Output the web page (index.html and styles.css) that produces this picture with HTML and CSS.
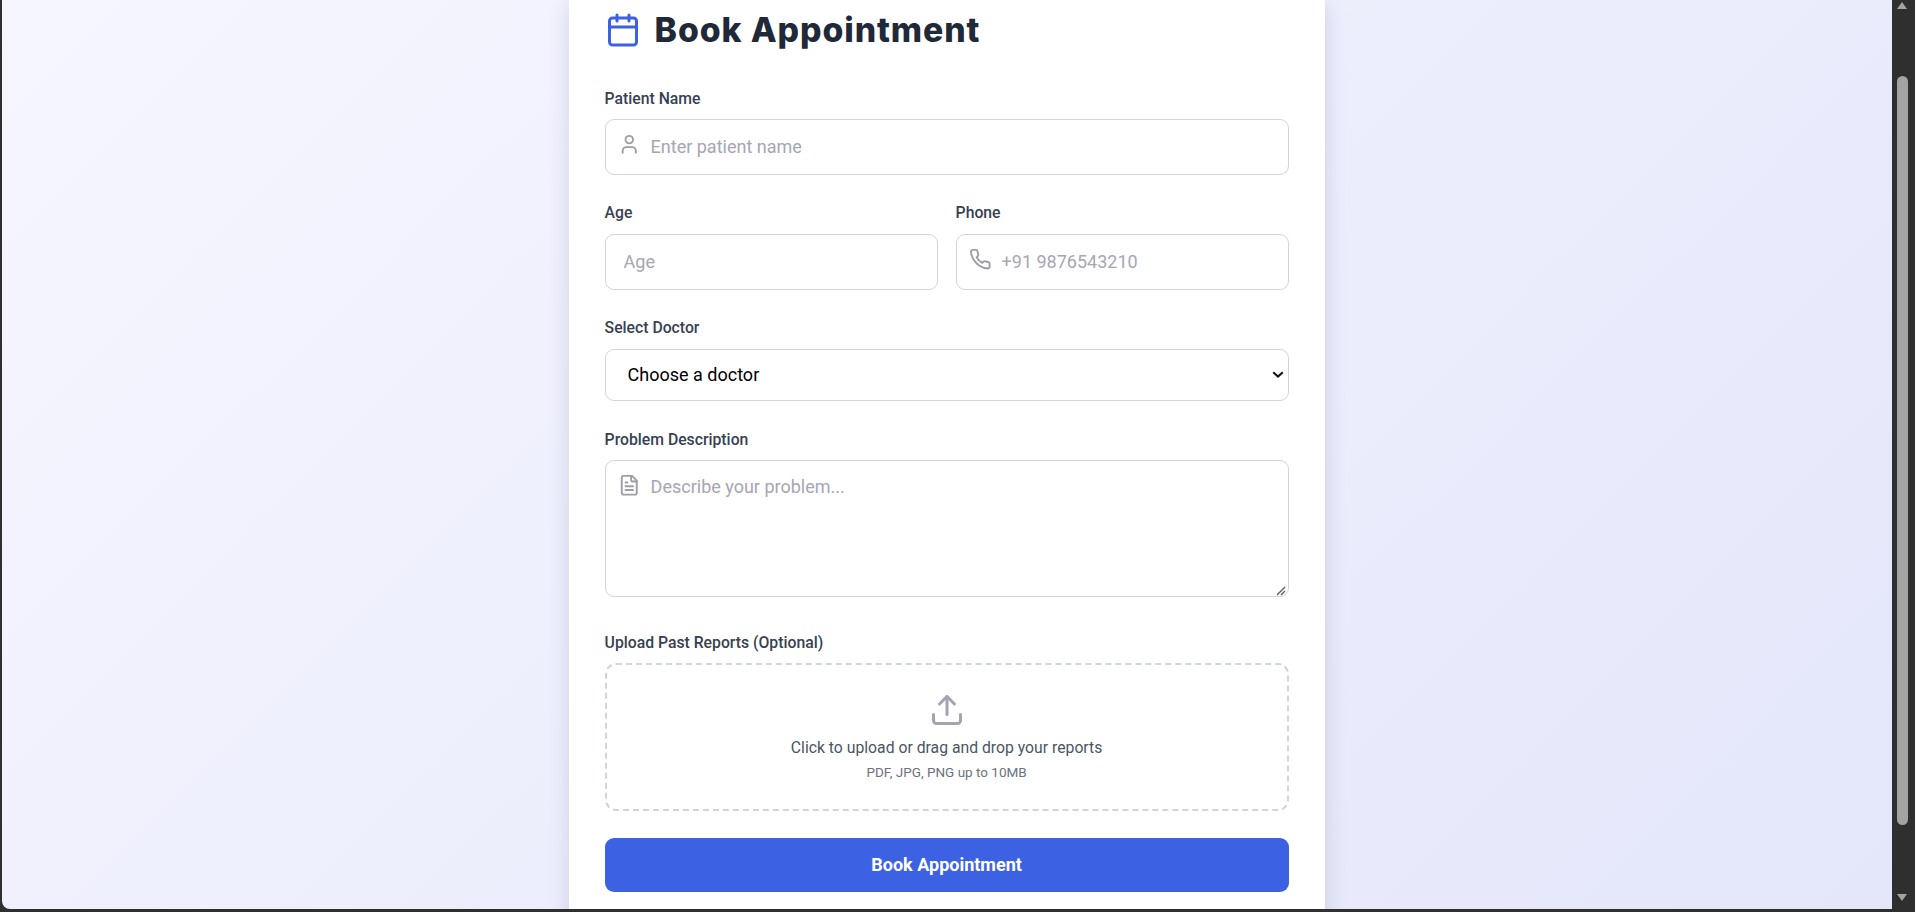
FILE: index.html
```html
<!DOCTYPE html>
<html lang="en">
<head>
<meta charset="utf-8">
<title>Book Appointment</title>
<link rel="stylesheet" href="styles.css">
</head>
<body>
<div class="window">
  <main class="page">
    <section class="card">
      <h1 class="title">
        <svg class="title-icon" viewBox="0 0 24 24" fill="none" stroke="currentColor" stroke-width="2" stroke-linecap="round" stroke-linejoin="round"><path d="M8 2v4"/><path d="M16 2v4"/><rect x="3" y="4" width="18" height="18" rx="2"/><path d="M3 10h18"/></svg>
        <span>Book Appointment</span>
      </h1>
      <form class="form">
        <div class="group">
          <label class="label">Patient Name</label>
          <div class="field">
            <svg class="icon" viewBox="0 0 24 24" fill="none" stroke="currentColor" stroke-width="2" stroke-linecap="round" stroke-linejoin="round"><path d="M19 21v-2a4 4 0 0 0-4-4H9a4 4 0 0 0-4 4v2"/><circle cx="12" cy="7" r="4"/></svg>
            <input class="input with-icon" type="text" placeholder="Enter patient name">
          </div>
        </div>
        <div class="row">
          <div class="group">
            <label class="label label-high">Age</label>
            <input class="input" type="text" placeholder="Age">
          </div>
          <div class="group">
            <label class="label label-high">Phone</label>
            <div class="field">
              <svg class="icon" viewBox="0 0 24 24" fill="none" stroke="currentColor" stroke-width="2" stroke-linecap="round" stroke-linejoin="round"><path d="M22 16.92v3a2 2 0 0 1-2.18 2 19.79 19.79 0 0 1-8.63-3.07 19.5 19.5 0 0 1-6-6 19.79 19.79 0 0 1-3.07-8.67A2 2 0 0 1 4.11 2h3a2 2 0 0 1 2 1.72 12.84 12.84 0 0 0 .7 2.81 2 2 0 0 1-.45 2.11L8.09 9.91a16 16 0 0 0 6 6l1.27-1.27a2 2 0 0 1 2.11-.45 12.84 12.84 0 0 0 2.81.7A2 2 0 0 1 22 16.92z"/></svg>
              <input class="input with-icon" type="text" placeholder="+91 9876543210">
            </div>
          </div>
        </div>
        <div class="group">
          <label class="label label-high">Select Doctor</label>
          <select class="select"><option>Choose a doctor</option></select>
        </div>
        <div class="group">
          <label class="label">Problem Description</label>
          <div class="field">
            <svg class="icon" viewBox="0 0 24 24" fill="none" stroke="currentColor" stroke-width="2" stroke-linecap="round" stroke-linejoin="round"><path d="M15 2H6a2 2 0 0 0-2 2v16a2 2 0 0 0 2 2h12a2 2 0 0 0 2-2V7Z"/><path d="M14 2v4a2 2 0 0 0 2 2h4"/><path d="M10 9H8"/><path d="M16 13H8"/><path d="M16 17H8"/></svg>
            <textarea class="textarea" placeholder="Describe your problem..."></textarea>
          </div>
        </div>
        <div class="group">
          <label class="label">Upload Past Reports (Optional)</label>
          <div class="drop">
            <svg class="drop-icon" viewBox="0 0 24 24" fill="none" stroke="currentColor" stroke-width="2" stroke-linecap="round" stroke-linejoin="round"><path d="M21 15v4a2 2 0 0 1-2 2H5a2 2 0 0 1-2-2v-4"/><path d="M17 8l-5-5-5 5"/><path d="M12 3v12"/></svg>
            <p class="drop-text">Click to upload or drag and drop your reports</p>
            <p class="drop-hint">PDF, JPG, PNG up to 10MB</p>
          </div>
        </div>
        <button class="submit" type="button">Book Appointment</button>
      </form>
    </section>
  </main>
  <aside class="scrollbar">
    <span class="arrow-up"></span>
    <span class="track"><span class="thumb"></span></span>
    <span class="arrow-down"></span>
  </aside>
</div>
</body>
</html>
```
FILE: styles.css
```css
* { box-sizing: border-box; }
html, body { margin: 0; height: 100%; overflow: hidden; }
body { background: #2f2f2f; font-family: Roboto, "Liberation Sans", sans-serif; }
.window { display: flex; height: 912px; padding: 0 3px 3px 2px; }
.page {
  flex: 1;
  min-width: 0;
  overflow: hidden;
  display: flex;
  justify-content: center;
  align-items: flex-start;
  border-bottom-left-radius: 8px;
  background: linear-gradient(135deg, #f6f6ff 0%, #e4e6fa 100%);
}
.card {
  width: 756px;
  padding: 10px 36.4px 40px 35.6px;
  background: #fff;
  box-shadow: 0 4px 20px rgba(40, 50, 110, .16);
}
.title {
  display: flex;
  align-items: center;
  gap: 14px;
  height: 40px;
  margin: 0 0 37px;
  font-family: Inter, Roboto, sans-serif;
  font-size: 33.75px;
  font-weight: 800;
  line-height: 40px;
  letter-spacing: .9px;
  color: #1f2937;
}
.title-icon { width: 36px; height: 36px; color: #3d61e3; flex: none; }
.form { display: flex; flex-direction: column; }
.group { margin-bottom: 27px; min-width: 0; }
.row { display: grid; grid-template-columns: 1fr 1fr; gap: 18px; }
.label {
  display: block;
  margin-bottom: 8px;
  font-size: 15.75px;
  font-weight: 500;
  line-height: 24px;
  color: #374151;
}
.label-high { margin-top: -1px; margin-bottom: 9px; }
.field { position: relative; }
.icon { position: absolute; left: 13.5px; top: 13.5px; width: 22.5px; height: 22.5px; color: #9c9cab; }
.input, .textarea, .select {
  width: 100%;
  border: 1px solid #d1d5db;
  border-radius: 9px;
  background: #fff;
  font-family: Roboto, sans-serif;
  font-size: 18px;
  outline: none;
}
.input { display: block; height: 56px; padding: 0 18px 2px; }
.input.with-icon { padding-left: 45px; }
.input::placeholder, .textarea::placeholder { color: #a6a6b4; opacity: 1; }
.select {
  display: block;
  height: 52px;
  padding: 0 22px 2px;
  color: #000;
  appearance: none;
  background-image: url("data:image/svg+xml,%3Csvg xmlns='http://www.w3.org/2000/svg' width='12' height='8'%3E%3Cpath d='M1.2 1.2 6 5.6l4.8-4.4' fill='none' stroke='%23111' stroke-width='2'/%3E%3C/svg%3E");
  background-repeat: no-repeat;
  background-position: right 4px center;
}
.textarea { height: 137px; margin-bottom: 3px; padding: 15px 18px 13px 45px; resize: vertical; }
.textarea::-webkit-resizer {
  background: url("data:image/svg+xml,%3Csvg xmlns='http://www.w3.org/2000/svg' width='15' height='15'%3E%3Cpath d='M4 14l8-8M8 14l4-4' fill='none' stroke='%23555' stroke-width='1.2'/%3E%3C/svg%3E") no-repeat;
}
.drop {
  display: flex;
  flex-direction: column;
  align-items: center;
  height: 148px;
  padding-top: 27px;
  border: 2px dashed #d1d5db;
  border-radius: 11px;
}
.drop-icon { width: 36px; height: 36px; color: #a3a3b1; }
.drop-text { margin: 8px 0 0; font-size: 15.75px; line-height: 24px; color: #4b5563; }
.drop-hint { margin: 2px 0 0; font-size: 13.5px; line-height: 20px; color: #6b7280; }
.submit {
  height: 54px;
  padding: 0 0 2px;
  border: 0;
  border-radius: 9px;
  background: #3d61e3;
  color: #fff;
  font-family: Roboto, sans-serif;
  font-size: 18px;
  font-weight: 700;
}
.scrollbar { flex: none; width: 20px; display: flex; flex-direction: column; align-items: center; background: #2f2f2f; }
.arrow-up, .arrow-down { width: 0; height: 0; border-left: 5px solid transparent; border-right: 5px solid transparent; flex: none; }
.arrow-up { margin-top: 2px; border-bottom: 7px solid #a3a3a3; }
.arrow-down { margin-bottom: 8px; border-top: 7px solid #a3a3a3; }
.track { flex: 1; width: 100%; display: flex; justify-content: center; padding-top: 67px; }
.thumb { width: 11px; height: 749px; border-radius: 6px; background: #a3a3a3; }
```
